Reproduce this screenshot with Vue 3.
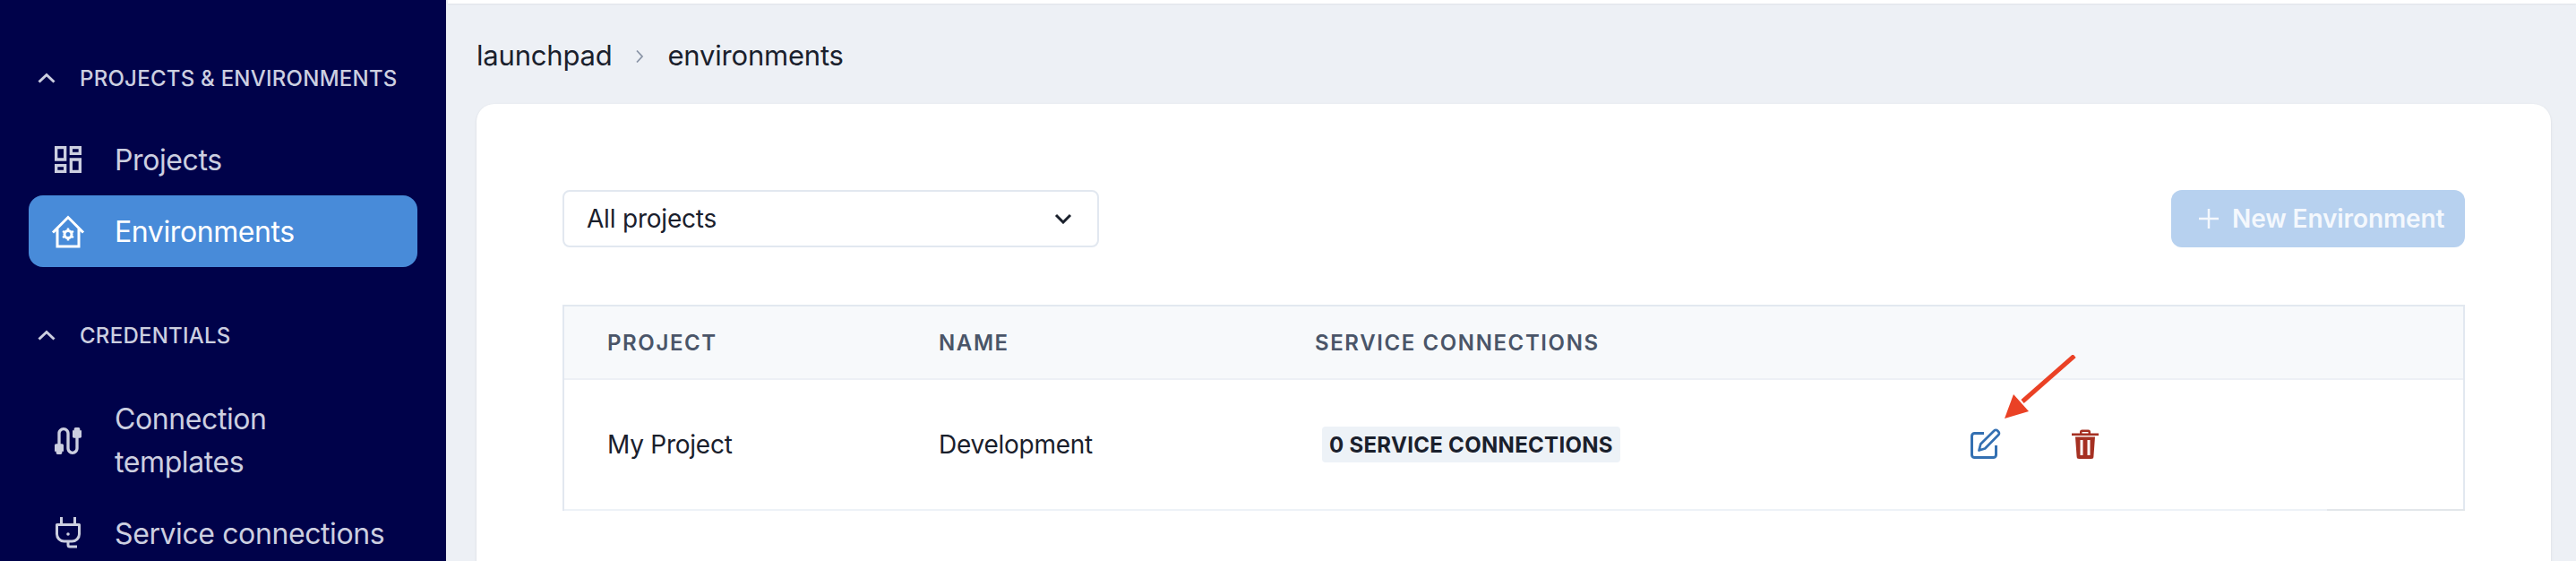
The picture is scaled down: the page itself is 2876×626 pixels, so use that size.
<template>
  <div class="page">
    <aside class="sidebar">
      <div class="group-title">
        <svg class="chev" viewBox="0 0 20 12"><path d="M1.500 10.500 10 2.500l8.500 8" /></svg>
        <span>PROJECTS &amp; ENVIRONMENTS</span>
      </div>
      <div class="nav-item low">
        <svg class="nav-icon" viewBox="0 0 24 24" fill="currentColor">
          <path d="M19 5v2h-4V5h4M9 5v6H5V5h4m10 8v6h-4v-6h4M9 17v2H5v-2h4M21 3h-8v6h8V3zM11 3H3v10h8V3zm10 8h-8v10h8V11zm-10 4H3v6h8v-6z" />
        </svg>
        <span>Projects</span>
      </div>
      <div class="nav-item low active">
        <svg class="nav-icon" viewBox="0 0 40 40">
          <path d="M3 21.500 20 4.500l17 17M8 17.500V37h24V17.500" fill="none" stroke="currentColor" stroke-width="3" />
          <circle cx="20" cy="23.500" r="4" fill="none" stroke="currentColor" stroke-width="3" />
          <path d="M20 16.500v14M14 20l12 7M26 20l-12 7" stroke="currentColor" stroke-width="2.500" stroke-dasharray="2.500 9" />
        </svg>
        <span>Environments</span>
      </div>

      <div class="group-title second">
        <svg class="chev" viewBox="0 0 20 12"><path d="M1.500 10.500 10 2.500l8.500 8" /></svg>
        <span>CREDENTIALS</span>
      </div>
      <div class="nav-item tall">
        <svg class="nav-icon" viewBox="0 0 24 24" fill="currentColor">
          <path d="M20 5V4c0-.55-.45-1-1-1h-2c-.55 0-1 .45-1 1v1h-1v4c0 .55.45 1 1 1h1v7c0 1.100-.9 2-2 2s-2-.9-2-2V7c0-2.210-1.790-4-4-4S5 4.790 5 7v7H4c-.55 0-1 .45-1 1v4h1v1c0 .55.45 1 1 1h2c.55 0 1-.45 1-1v-1h1v-4c0-.55-.45-1-1-1H7V7c0-1.100.9-2 2-2s2 .9 2 2v10c0 2.210 1.790 4 4 4s4-1.790 4-4v-7h1c.55 0 1-.45 1-1V5h-1z" />
        </svg>
        <span>Connection<br />templates</span>
      </div>
      <div class="nav-item">
        <svg class="nav-icon" viewBox="0 0 40 40" fill="none" stroke="currentColor" stroke-width="3">
          <path d="M12.500 1v8M27.500 1v8" />
          <path d="M7.500 9.500h25V20a8 8 0 0 1-8 8h-9a8 8 0 0 1-8-8z" stroke-linejoin="round" />
          <path d="M20 28v4a2 2 0 0 0 2 2h8" />
          <circle cx="20" cy="20" r="1.800" fill="currentColor" stroke="none" />
        </svg>
        <span>Service connections</span>
      </div>
    </aside>

    <main class="main">
      <div class="topbar"></div>
      <div class="crumbs">
        <span>launchpad</span>
        <svg class="crumb-sep" viewBox="0 0 10 18"><path d="M2 2.500 8 9l-6 6.500" /></svg>
        <span>environments</span>
      </div>

      <section class="card">
        <div class="toolbar">
          <div class="select">
            <span>All projects</span>
            <svg class="select-chev" viewBox="0 0 20 12"><path d="M2 2l8 8 8-8" /></svg>
          </div>
          <button class="new-btn">
            <svg class="plus" viewBox="0 0 22 22"><path d="M11 0v22M0 11h22" /></svg>
            New Environment
          </button>
        </div>

        <div class="table">
          <div class="row head">
            <div v-for="col in columns" :key="col">{{ col }}</div>
            <div></div>
          </div>
          <div class="row body">
            <div>My Project</div>
            <div>Development</div>
            <div><span class="badge">0 SERVICE CONNECTIONS</span></div>
            <div class="actions">
              <svg class="act edit" viewBox="0 0 40 40" fill="none" stroke="currentColor">
                <path d="M19 7.500H8.500a3 3 0 0 0-3 3v21a3 3 0 0 0 3 3h21a3 3 0 0 0 3-3V21" stroke-width="3" />
                <path d="M13.500 26.500l1.800-7L30.500 4.500a2.400 2.400 0 0 1 3.500 0l1.200 1.200a2.400 2.400 0 0 1 0 3.500L20.200 24.500z" stroke-width="2.700" stroke-linejoin="round" />
              </svg>
              <svg class="act trash" viewBox="0 0 40 40" fill="currentColor">
                <path d="M5 7.500h30v2.600H5z" />
                <path d="M14 8V6a2.500 2.500 0 0 1 2.500-2.500h7A2.500 2.500 0 0 1 26 6v2h-2.500V6h-7v2z" />
                <path fill-rule="evenodd" d="M9 11.500h22l-1.600 22a2.500 2.500 0 0 1-2.500 2.500H13.100a2.500 2.500 0 0 1-2.500-2.500zM14.500 15v17h3V15zM22.500 15v17h3V15z" />
              </svg>
            </div>
          </div>
          <div class="scroll-edge"></div>
        </div>
      </section>
    </main>

    <svg class="arrow" viewBox="0 0 90 80">
      <path d="M78 1 20 52" stroke="#ea4125" stroke-width="5" fill="none" />
      <path d="M0 71 10 44 27 63z" fill="#ea4125" />
    </svg>
  </div>
</template>

<script setup>
const columns = ['PROJECT', 'NAME', 'SERVICE CONNECTIONS']
</script>

<style>
html,
body {
  margin: 0;
  overflow: hidden;
}
</style>

<style scoped>
.page {
  position: relative;
  display: flex;
  width: 2876px;
  height: 626px;
  overflow: hidden;
  background: #edf0f5;
  font-family: Inter, "Liberation Sans", sans-serif;
  color: #1a202c;
}

.sidebar {
  flex: none;
  width: 498px;
  padding-top: 63px;
  box-sizing: border-box;
  background: #00024a;
  color: #cccfe0;
}

.group-title {
  display: flex;
  align-items: center;
  height: 48px;
  margin-bottom: 27px;
  padding-left: 42px;
  font-size: 24px;
  font-weight: 500;
  letter-spacing: 0.25px;
}

.group-title.second {
  margin-top: 52px;
  margin-bottom: 30px;
}

.chev {
  width: 20px;
  height: 12px;
  margin-right: 27px;
  fill: none;
  stroke: currentColor;
  stroke-width: 3;
}

.nav-item {
  display: flex;
  align-items: center;
  gap: 32px;
  width: 434px;
  height: 80px;
  margin-left: 32px;
  padding-left: 24px;
  box-sizing: border-box;
  border-radius: 16px;
  font-size: 32px;
  line-height: 48px;
  letter-spacing: -0.4px;
}

.nav-item.tall {
  height: 128px;
}

.nav-item.low span {
  padding-top: 2px;
}

.nav-item.active {
  background: #488bd9;
  color: #fff;
}

.nav-icon {
  flex: none;
  width: 40px;
  height: 40px;
}

.main {
  flex: 1;
  position: relative;
  min-width: 0;
  padding: 0 28px 0 34px;
}

.topbar {
  position: absolute;
  top: 0;
  left: 2px;
  right: 0;
  height: 4px;
  background: #fff;
  box-shadow: 0 1px 2px rgba(0, 0, 0, 0.06);
}

.crumbs {
  display: flex;
  align-items: center;
  gap: 26px;
  height: 116px;
  padding-top: 6px;
  box-sizing: border-box;
  font-size: 31px;
  letter-spacing: -0.2px;
}

.crumb-sep {
  width: 10px;
  height: 18px;
  margin-top: 4px;
  fill: none;
  stroke: #8a94a6;
  stroke-width: 1.800;
}

.card {
  height: 560px;
  padding: 96px 96px 0;
  box-sizing: border-box;
  background: #fff;
  border-radius: 20px;
  box-shadow: 0 1px 3px rgba(0, 0, 0, 0.1);
}

.toolbar {
  display: flex;
  align-items: center;
  justify-content: space-between;
  height: 64px;
  margin-bottom: 64px;
}

.select {
  display: flex;
  align-items: center;
  justify-content: space-between;
  width: 599px;
  height: 64px;
  padding: 0 28px 0 25px;
  box-sizing: border-box;
  border: 2px solid #e2e8f0;
  border-radius: 8px;
  font-size: 28px;
  letter-spacing: -0.2px;
}

.select-chev {
  width: 20px;
  height: 12px;
  fill: none;
  stroke: #1a202c;
  stroke-width: 3;
}

.new-btn {
  display: flex;
  align-items: center;
  gap: 15px;
  width: 328px;
  height: 64px;
  padding: 0 0 0 31px;
  border: none;
  border-radius: 12px;
  background: #b7d1ef;
  color: #f4f8fd;
  font-family: inherit;
  font-size: 28px;
  font-weight: 600;
  letter-spacing: -0.1px;
}

.plus {
  width: 22px;
  height: 22px;
  fill: none;
  stroke: #f4f8fd;
  stroke-width: 2.500;
}

.table {
  position: relative;
  border: 2px solid #e2e8f0;
  border-bottom: none;
}

.row {
  display: grid;
  grid-template-columns: 370px 420px 728px 1fr;
  align-items: center;
}

.row > div:not(.actions) {
  padding-left: 48px;
}

.head {
  height: 80px;
  background: #f7f9fb;
  border-bottom: 2px solid #edf0f5;
  color: #4a5568;
  font-size: 24px;
  font-weight: 600;
  letter-spacing: 1.600px;
}

.body {
  height: 144px;
  border-bottom: 2px solid #edf2f7;
  font-size: 28px;
  letter-spacing: -0.25px;
}

.badge {
  display: inline-block;
  margin-left: 8px;
  padding: 0 8px;
  height: 40px;
  line-height: 41px;
  border-radius: 4px;
  background: #edf2f7;
  font-size: 24px;
  font-weight: 700;
  letter-spacing: 0.3px;
}

.actions {
  display: flex;
  align-items: center;
  gap: 72px;
  padding-left: 48px;
}

.act {
  width: 40px;
  height: 40px;
}

.edit {
  color: #3470b2;
}

.trash {
  color: #a53022;
}

.scroll-edge {
  position: absolute;
  right: -2px;
  bottom: 0;
  width: 154px;
  height: 2px;
  background: #e2e6ea;
}

.arrow {
  position: absolute;
  left: 2238px;
  top: 396px;
  width: 90px;
  height: 80px;
}
</style>
